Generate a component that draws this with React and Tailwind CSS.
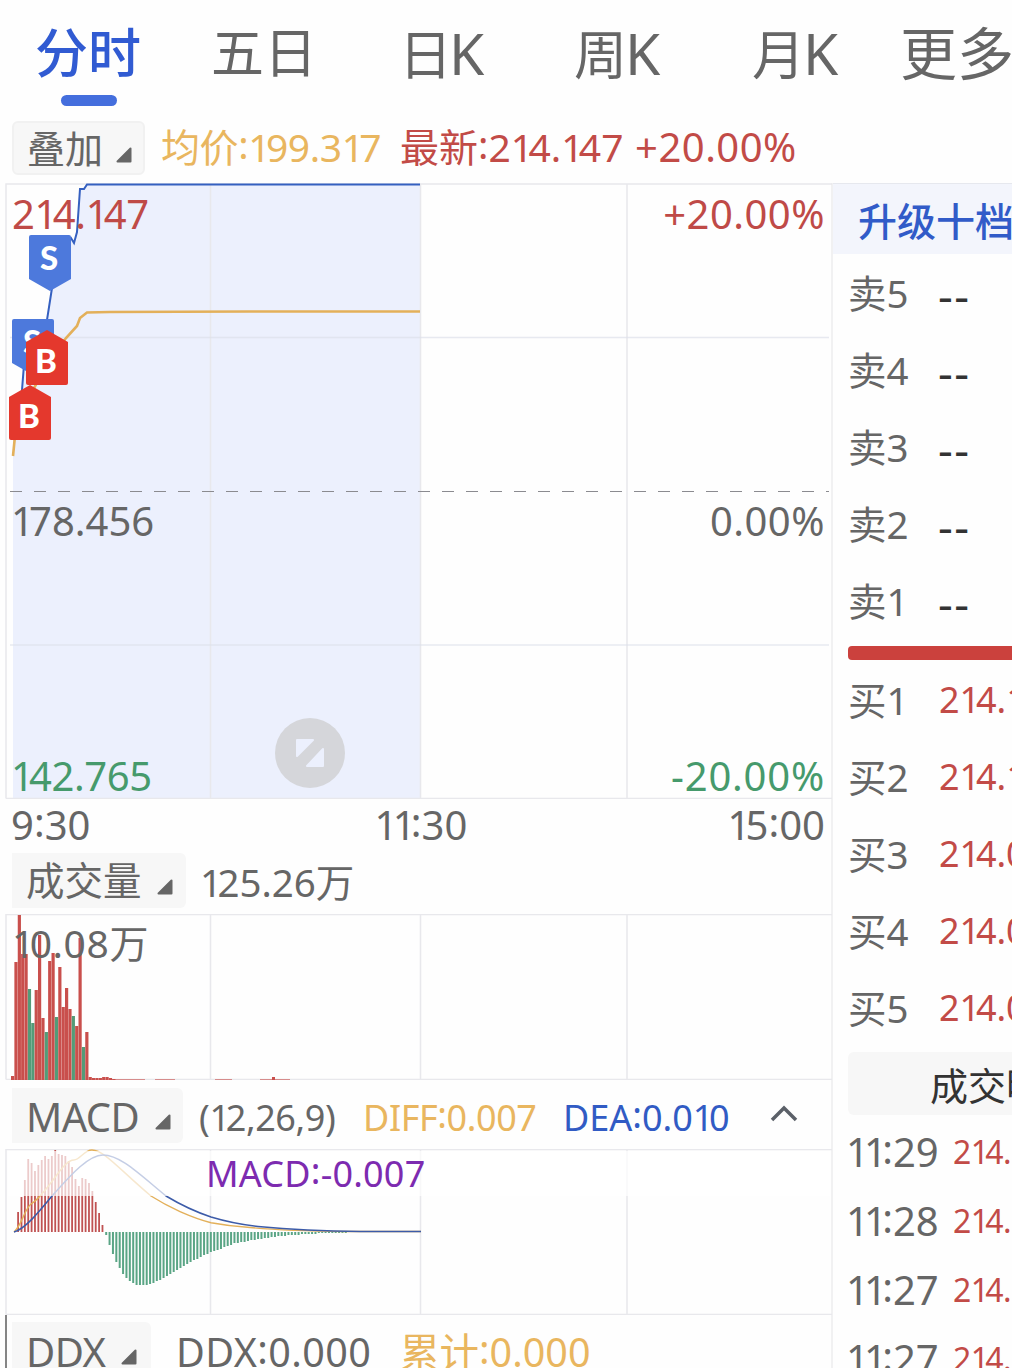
const PRICE = "13,440 22,390 25,352 42,330 47,320 52,288 58,250 71,238 74,243 77,232 80,189 84,189 87,184.5 420,184.5";
const PRICE_AREA = `${PRICE} 420,798 13,798`;
const AVERAGE = "13,456 15,436 30,395 50,360 66,338 77,326 80,318 87,312.5 110,312 250,311.5 420,311.5";

// [bar top, falling]
const VOLUME = [
  [1076], [962], [915], [954], [954], [989, 1], [1023, 1], [990], [935], [1018], [1032, 1], [961],
  [953], [1017, 1], [967], [1007], [988], [1009], [1016, 1], [1026], [938], [1047, 1], [1032],
  [1077], [1078], [1078], [1078], [1077], [1077], [1078], [1079],
];

const MACD_UP = [1212, 1197, 1180, 1159, 1163, 1171, 1165, 1160, 1156, 1159, 1156, 1150, 1154, 1155, 1156, 1161, 1167, 1179, 1186, 1178, 1179, 1183, 1191, 1202, 1213, 1225];
const MACD_DOWN = [
  1235, 1245, 1254, 1262, 1268, 1274, 1278, 1281, 1283, 1285, 1285, 1285, 1285, 1284, 1283, 1281, 1280, 1278, 1276, 1274,
  1272, 1270, 1268, 1266, 1264, 1262, 1260, 1259, 1257, 1255, 1254, 1252, 1251, 1250, 1249, 1247, 1246, 1245, 1243, 1243,
  1242, 1242, 1241, 1240, 1240, 1239, 1239, 1238, 1238, 1237, 1237, 1236, 1236, 1236, 1235, 1235, 1235, 1235, 1234, 1234,
  1234, 1234, 1234, 1233, 1233, 1233, 1233, 1233, 1233, 1233, 1233, 1233,
];

const SELLS = ["5", "4", "3", "2", "1"];
const BUYS = [["1", "214.147"], ["2", "214.140"], ["3", "214.030"], ["4", "214.020"], ["5", "214.000"]];
const TRADES = ["11:29", "11:28", "11:27", "11:27"];

// Proportional figures: narrow "1", centred ":"
function Num({ children }) {
  return children.split(/([1:])/).map((part, i) => {
    if (part === "1") return <span key={i} className="tracking-[-0.12em]">1</span>;
    if (part === ":") return <span key={i} className="relative -top-[0.07em]">:</span>;
    return part;
  });
}

function Triangle({ className }) {
  return (
    <svg className={className} width="16" height="16" viewBox="0 0 16 16">
      <path d="M14.500 1.500V14.500H1.500Z" fill="#666" stroke="#666" strokeWidth="2" strokeLinejoin="round" />
    </svg>
  );
}

function Grid({ top, bottom }) {
  return (
    <path
      d={`M6 ${bottom}V${top}H832M6 ${bottom}H832M210.5 ${top}V${bottom}M420.5 ${top}V${bottom}M627 ${top}V${bottom}`}
      fill="none"
      stroke="#e8e8ec"
      strokeWidth="1.5"
    />
  );
}

function Marker({ x, y, type }) {
  const sell = type === "S";
  return (
    <g transform={`translate(${x} ${y})`}>
      <path
        d={sell ? "M2 0H40Q42 0 42 2V44L21 56L0 44V2Q0 0 2 0Z" : "M21 0L42 12V53Q42 55 40 55H2Q0 55 0 53V12Z"}
        fill={sell ? "#4d79dc" : "#e4382d"}
      />
      <text x="20" y={sell ? 35 : 43} textAnchor="middle" fill="#fff" fontSize="33" fontWeight="900" fontFamily="Lato">
        {type}
      </text>
    </g>
  );
}

function PriceChart() {
  return (
    <div className="relative h-[616px]">
      <svg className="block" width="833" height="616" viewBox="0 183 833 616">
        <polygon points={PRICE_AREA} fill="#ecf0fd" />
        <Grid top={184} bottom={798.5} />
        <path d="M10 337.5H829M10 645H829" stroke="#dde0ea" strokeOpacity=".7" strokeWidth="1.3" />
        <path d="M10 491.5H829" stroke="#8b8b90" strokeWidth="1.2" strokeDasharray="12 12" />
        <polyline points={PRICE} fill="none" stroke="#3560c0" strokeWidth="2" />
        <polyline points={AVERAGE} fill="none" stroke="#e3b05a" strokeWidth="2.6" />
        <Marker x={29} y={235} type="S" />
        <Marker x={12} y={319} type="S" />
        <Marker x={26} y={330} type="B" />
        <Marker x={9} y={385} type="B" />
        <circle cx="310" cy="753" r="35" fill="#d5d6da" />
        <path d="M297 740H313L297 756ZM323 749V766H307Z" fill="#ecf0fd" stroke="#ecf0fd" strokeWidth="2" strokeLinejoin="round" />
      </svg>
      <div className="absolute inset-0 text-[40px] leading-none">
        <span className="absolute left-[12px] top-[11px] tracking-[-0.3px] text-[#bf4a47]"><Num>214.147</Num></span>
        <span className="absolute right-[6px] top-[11px] tracking-[0.5px] text-[#bf4a47]">+20.00%</span>
        <span className="absolute left-[11px] top-[318px] text-[#666]"><Num>178.456</Num></span>
        <span className="absolute right-[6px] top-[318px] tracking-[0.5px] text-[#666]">0.00%</span>
        <span className="absolute left-[11px] top-[573px] tracking-[-0.4px] text-[#469a6c]"><Num>142.765</Num></span>
        <span className="absolute right-[6px] top-[573px] tracking-[0.8px] text-[#469a6c]">-20.00%</span>
      </div>
    </div>
  );
}

function VolumeChart() {
  return (
    <div className="relative h-[166px]">
      <svg className="block" width="833" height="166" viewBox="0 914 833 166">
        <Grid top={914.5} bottom={1079.5} />
        {VOLUME.map(([top, falling], i) => (
          <rect key={i} x={11 + i * 3.375} y={top} width="3.2" height={1080 - top} fill={falling ? "#549b78" : "#c94f4c"} />
        ))}
        <path d="M112 1079.5H145M155 1079.5H175M215 1079.5H232M260 1079.5H290" stroke="#c94f4c" strokeOpacity=".6" />
        <path d="M273.5 1077V1080" stroke="#c94f4c" strokeWidth="3" />
      </svg>
      <span className="absolute left-[12px] top-[9px] text-[39px] leading-none tracking-[0.6px]"><Num>10.08万</Num></span>
    </div>
  );
}

function MacdChart() {
  return (
    <div className="relative h-[166px]">
      <svg className="block" width="833" height="166" viewBox="0 1149 833 166">
        <Grid top={1149.5} bottom={1314.5} />
        {MACD_UP.map((top, i) => (
          <rect key={i} x={17.2 + i * 3.375} y={top} width="1.8" height={1232 - top} fill="#c05252" />
        ))}
        {MACD_DOWN.map((bottom, i) => (
          <rect key={i} x={105.2 + i * 3.375} y="1232" width="2" height={bottom - 1232} fill="#5aa585" />
        ))}
        <path
          d="M14 1232C22 1225 24 1210 31 1204C38 1200 48 1187 56 1176C62 1168 68 1160 74 1160C80 1160 84 1150 92 1150C104 1150 120 1170 151 1196C162 1203 170 1207 180 1211.6C190 1216 200 1220 211 1222.7C226 1225.5 238 1226.7 250 1227.5C275 1230 300 1231 345 1231.5H421"
          fill="none"
          stroke="#e3b05a"
          strokeWidth="1.4"
        />
        <path
          d="M14 1232C25 1229 38 1213 52 1196C70 1176 88 1155 103 1155C120 1155 138 1173 166 1196C176 1202 193 1211 211 1217C226 1221.5 240 1224.5 258 1226.5C285 1229 310 1231 360 1231.5H421"
          fill="none"
          stroke="#3c5ba8"
          strokeWidth="1.5"
        />
        <rect x="8" y="1151" width="822" height="45" fill="#fff" fillOpacity=".7" />
      </svg>
      <span className="absolute left-[206px] top-[7px] text-[36px] leading-none tracking-[0.2px] text-[#7d2bb0]"><Num>MACD:-0.007</Num></span>
    </div>
  );
}

export default function App() {
  return (
    <div className="h-[1368px] w-[1012px] overflow-hidden bg-[#fefefe] font-['Noto_Sans','Noto_Sans_CJK_SC',sans-serif] whitespace-nowrap text-[#666]">
      <nav className="flex h-[116px] text-[53px] leading-[106px] [&>div]:shrink-0">
        <div className="ml-[35px] w-[176px] font-medium text-[#315bd2]">
          <div className="h-[95px]">分时</div>
          <div className="ml-[26px] h-[11px] w-[56px] rounded-full bg-[#446edd]" />
        </div>
        <div className="w-[188px]">五日</div>
        <div className="w-[175px]">日<span className="-ml-[3px] text-[57px]">K</span></div>
        <div className="w-[178px]">周<span className="-ml-[2px] text-[57px]">K</span></div>
        <div className="w-[148px]">月<span className="-ml-[2px] text-[57px]">K</span></div>
        <div className="text-[57px]">更多</div>
      </nav>
      <div className="flex h-[67px] pt-[4px] text-[39px] leading-[54px] [&>*]:shrink-0">
        <div className="mt-px ml-[12px] flex h-[54px] w-[133px] items-center rounded-md border-2 border-[#f1f1f1] bg-[#f7f7f7] pl-[13px] text-[38px]">
          叠加<Triangle className="mt-[13px] ml-[13px]" />
        </div>
        <span className="ml-[16px] w-[239px] tracking-[-0.4px] text-[#e9b65f]"><Num>均价:199.317</Num></span>
        <span className="w-[235px] text-[#c24b47]"><Num>最新:214.147</Num></span>
        <span className="text-[40px] tracking-[0.5px] text-[#c24b47]">+20.00%</span>
      </div>
      <div className="flex h-[1185px]">
        <main className="w-[833px] shrink-0 border-r-2 border-[#f1f1f2]">
          <PriceChart />
          <div className="flex h-[54px] justify-between pr-[6px] pl-[11px] text-[40px] leading-[52px]">
            <span><Num>9:30</Num></span>
            <span className="ml-[24px]"><Num>11:30</Num></span>
            <span><Num>15:00</Num></span>
          </div>
          <div className="flex h-[61px] text-[38.5px] leading-[59px]">
            <div className="ml-[12px] flex h-[55px] w-[174px] shrink-0 items-center rounded-r-md bg-[#f7f7f7] pl-[14px]">
              成交量<Triangle className="mt-[12px] ml-[15px]" />
            </div>
            <span className="ml-[14px]"><Num>125.26万</Num></span>
          </div>
          <VolumeChart />
          <div className="flex h-[69px] pt-[8px] text-[36px] leading-[60px] [&>*]:shrink-0">
            <div className="ml-[12px] flex h-[55px] w-[171px] items-center rounded-r-md bg-[#f7f7f7] pt-[2px] pl-[14px] text-[40px] tracking-[-0.6px]">
              MACD<Triangle className="mt-[11px] ml-[16px]" />
            </div>
            <span className="ml-[16px] w-[164px] tracking-[-0.4px]"><Num>(12,26,9)</Num></span>
            <span className="w-[200px] tracking-[-0.4px] text-[#e9b65f]"><Num>DIFF:0.007</Num></span>
            <span className="w-[207px] text-[#315bc4]"><Num>DEA:0.010</Num></span>
            <svg className="mt-[16px]" width="28" height="20" viewBox="0 0 28 20">
              <path d="M2 16L14 4L26 16" fill="none" stroke="#5b6068" strokeWidth="3.5" />
            </svg>
          </div>
          <MacdChart />
          <div className="ml-[5px] flex h-[53px] border-l-2 border-[#858585] pt-[7px] text-[39.5px] leading-[61px] [&>*]:shrink-0">
            <div className="ml-[5px] flex h-[55px] w-[139px] items-center rounded-tr-md bg-[#f7f7f7] pt-1 pl-[14px] text-[40px] tracking-[-0.5px]">
              DDX<Triangle className="mt-[10px] ml-[15px]" />
            </div>
            <span className="ml-[25px] w-[224px] tracking-[0.4px]"><Num>DDX:0.000</Num></span>
            <span className="text-[#e9b65f]"><Num>累计:0.000</Num></span>
          </div>
        </main>
        <aside className="w-[179px] shrink-0 overflow-hidden">
          <div className="h-[71px] border-t border-[#e6e8ee] bg-[#f3f5fc] pl-[25px] text-[39px] leading-[74px] font-medium text-[#315bc8]">升级十档</div>
          <div className="leading-[79px]">
            {SELLS.map((n) => (
              <div key={n} className="flex h-[77px] pl-[15px]">
                <span className="w-[90px] shrink-0 text-[38.5px]">卖<Num>{n}</Num></span>
                <span className="pt-[1px] text-[46px] tracking-[1.5px] text-[#333]">--</span>
              </div>
            ))}
          </div>
          <div className="mt-[7px] ml-[15px] h-[14px] rounded-l bg-[#cb413d]" />
          <div className="mt-[2px] leading-[76px]">
            {BUYS.map(([n, price]) => (
              <div key={n} className="flex h-[77px] pl-[15px]">
                <span className="w-[91px] shrink-0 text-[38.5px]">买<Num>{n}</Num></span>
                <span className="text-[36px] text-[#c24b47]"><Num>{price}</Num></span>
              </div>
            ))}
          </div>
          <div className="mt-[5px] ml-[15px] h-[63px] rounded-l-md bg-[#f7f7f7] pl-[82px] text-[38px] leading-[66px] text-[#333]">成交明细</div>
          <div className="mt-[3px]">
            {TRADES.map((time, i) => (
              <div key={i} className="flex h-[69px] pl-[13px] leading-[67px]">
                <span className="w-[107px] shrink-0 text-[40px]"><Num>{time}</Num></span>
                <span className="text-[32px] tracking-[-0.5px] text-[#c24b47]"><Num>214.147</Num></span>
              </div>
            ))}
          </div>
        </aside>
      </div>
    </div>
  );
}
